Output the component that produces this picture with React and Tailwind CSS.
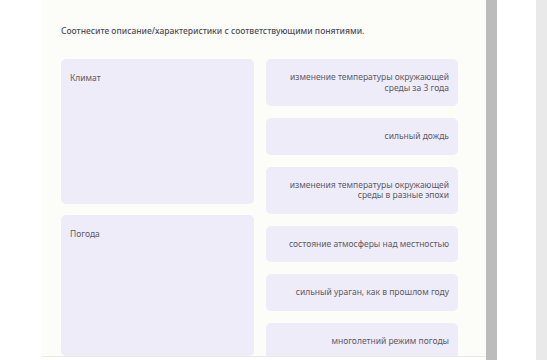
import React from 'react';

const LEFT = [
  { id: 1, label: 'Климат', h: 'h-[145px]' },
  { id: 2, label: 'Погода', h: 'h-[141px]' },
];

const RIGHT = [
  'изменение температуры окружающей\nсреды за 3 года',
  'сильный дождь',
  'изменения температуры окружающей\nсреды в разные эпохи',
  'состояние атмосферы над местностью',
  'сильный ураган, как в прошлом году',
  'многолетний режим погоды',
];

export default function App() {
  return (
    <div className="w-[547px] h-[360px] bg-white flex overflow-hidden font-['Noto_Sans',sans-serif] text-[#5b5b66]">
      <div className="w-[42px] shrink-0" />

      {/* Task panel */}
      <div className="w-[444px] h-[357px] shrink-0 bg-[#fcfcf8] border-b border-[#e9e9e6] pl-[19px] pt-[25px] overflow-hidden">
        <p className="text-[8.5px] leading-[12px] font-medium text-[#4e4e58] whitespace-nowrap">
          Соотнесите описание/характеристики с соответствующими понятиями.
        </p>

        <div className="flex gap-[12px] mt-[22px]">
          {/* Concepts */}
          <div className="w-[193px] flex flex-col gap-[11px]">
            {LEFT.map(item => (
              <div key={item.id} className={`${item.h} rounded-[5px] bg-[#efecfa] px-[9px] pt-[13px]`}>
                <span className="text-[8.5px] leading-[11px] block">{item.label}</span>
              </div>
            ))}
          </div>

          {/* Descriptions */}
          <div className="w-[192px] flex flex-col gap-[12px]">
            {RIGHT.map(text => (
              <div key={text} className="rounded-[5px] bg-[#efecfa] px-[9px] py-[13px] text-right">
                <span className="text-[8.5px] leading-[10.5px] block whitespace-pre-line">{text}</span>
              </div>
            ))}
          </div>
        </div>
      </div>

      {/* Scrollbar + side */}
      <div className="w-[11px] h-full shrink-0 bg-[#bcbcbc]" />
      <div className="w-[39px] h-full shrink-0 bg-white" />
      <div className="flex-1 h-full bg-[#e9e9e9]" />
    </div>
  );
}
